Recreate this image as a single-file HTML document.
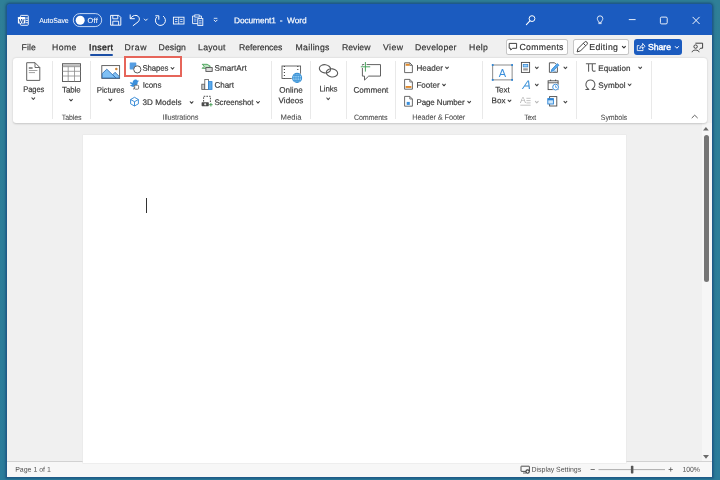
<!DOCTYPE html>
<html lang="en"><head><meta charset="utf-8"><title>Document1 - Word</title>
<style>
html,body{margin:0;padding:0}
body{width:720px;height:480px;overflow:hidden;position:relative;background:#2c7c9b;font-family:"Liberation Sans",sans-serif}
.a{position:absolute}
.t{text-rendering:geometricPrecision;-webkit-text-stroke:0.18px;position:absolute;left:0;top:0;transform-origin:0 0;white-space:pre;line-height:12px;font-family:"Liberation Sans",sans-serif}
svg{position:absolute;overflow:visible;will-change:transform}
.sep{position:absolute;width:1px;top:61px;height:58px;background:#e9e9e9}
.chev{position:absolute;width:5px;height:3px}
#labels{position:absolute;left:0;top:0;width:720px;height:480px;will-change:transform}

</style></head>
<body>
<!-- desktop background + window shadow -->
<div class="a" style="left:0;top:0;width:720px;height:480px;background:linear-gradient(180deg,#2f7f97 0%,#2b7c9b 100%)"></div>
<div class="a" id="win" style="left:7.4px;top:4.4px;width:704.7px;height:472.3px;border-radius:3px 3px 0 0;background:linear-gradient(180deg,#1b5bbf 0,#1b5bbf 31.2px,#f0f0f0 31.2px);box-shadow:0 0 0 1.3px #1f5b88,0 0 2.5px 1.6px rgba(20,66,105,.4);overflow:hidden">
  <!-- scrollbar track -->
  <div class="a" style="left:694.6px;top:119px;width:10.2px;height:339px;background:#f6f6f6"></div>
  <!-- status bar -->
  <div class="a" style="left:0;top:457px;width:705px;height:16px;background:#f7f7f7;border-top:0.8px solid #d2d2d2"></div>
</div>
<!-- ribbon panel -->
<div class="a" style="left:13px;top:57.5px;width:693.5px;height:65.5px;border-radius:3.2px;background:#fff;box-shadow:0 0.5px 2px rgba(0,0,0,.18)"></div>
<!-- page -->
<div class="a" style="left:82.5px;top:134.5px;width:543px;height:328px;background:#fff;box-shadow:0 0 0 0.5px #e6e6e6"></div>
<div class="a" style="left:146px;top:197.5px;width:1px;height:15px;background:#333"></div>
<!-- scrollbar -->
<div class="a" style="left:703.5px;top:135px;width:5.5px;height:147px;border-radius:3px;background:#757575"></div>
<svg style="left:703.4px;top:127.2px" width="5.8" height="3.6" viewBox="0 0 8 5"><path d="M0 5 L4 0 L8 5Z" fill="#6b6b6b"/></svg>
<svg style="left:703.4px;top:454.8px" width="6" height="3.9" viewBox="0 0 8 5"><path d="M0 0 L4 5 L8 0Z" fill="#6b6b6b"/></svg>
<!-- insert tab underline -->
<div class="a" style="left:90px;top:54px;width:22.5px;height:1.6px;border-radius:1px;background:#1c4fa6"></div>
<!-- header buttons -->
<div class="a" style="left:505.6px;top:39.1px;width:62px;height:15.6px;border-radius:2.5px;background:#fff;box-shadow:inset 0 0 0 .9px #c2c2c2"></div>
<div class="a" style="left:573.4px;top:39.1px;width:55.6px;height:15.6px;border-radius:2.5px;background:#fff;box-shadow:inset 0 0 0 .9px #c2c2c2"></div>
<div class="a" style="left:633.8px;top:39.1px;width:47.8px;height:15.7px;border-radius:3px;background:#1b5bbf"></div>
<!-- ribbon separators -->
<div class="sep" style="left:51.7px"></div>
<div class="sep" style="left:89.7px"></div>
<div class="sep" style="left:271.0px"></div>
<div class="sep" style="left:310.2px"></div>
<div class="sep" style="left:346.2px"></div>
<div class="sep" style="left:395.2px"></div>
<div class="sep" style="left:482.0px"></div>
<div class="sep" style="left:576.1px"></div>
<div class="sep" style="left:650.9px"></div>
<!-- shapes highlight -->
<div class="a" style="left:124.2px;top:56.1px;width:58.1px;height:20.8px;box-sizing:border-box;border:2px solid #e6655a"></div>

<!-- icons -->
<svg style="left:0;top:0" width="720" height="480" viewBox="0 0 720 480">
<rect x="20.4" y="15.4" width="7.9" height="9.9" rx="0.8" fill="none" stroke="#fff" stroke-width="0.9"/>
<path d="M25.6 18.1H28 M25.6 20.4H28 M25.6 22.7H28" stroke="#fff" stroke-width="0.9"/>
<rect x="17.9" y="17" width="7.4" height="6.5" rx="0.6" fill="#fff"/>
<text x="21.6" y="22.7" font-family="Liberation Sans, sans-serif" font-weight="700" font-size="6.1" text-anchor="middle" fill="#184a9a">W</text>
<rect x="73.3" y="13.6" width="28.4" height="13" rx="6.5" fill="none" stroke="#e2ecfb" stroke-width="0.85"/>
<circle cx="80.2" cy="20.2" r="4.5" fill="#fff"/>
<path d="M110.6 15.4 H118.8 L120.8 17.4 V25.2 H110.6 Z" fill="none" stroke="#fff" stroke-width="0.95" stroke-linejoin="round"/>
<path d="M112.8 15.6 V18.8 H117.8 V15.6 M112.8 25 V21.2 H118.6 V25" fill="none" stroke="#fff" stroke-width="0.9"/>
<path d="M130.2 14.9 V18.7 H134.4 M130.6 18.3 C131.8 16.4 134 15.2 136 15.4 C139.2 15.8 140.5 19.4 138.2 21.8 L133.2 25.6" fill="none" stroke="#fff" stroke-width="1" stroke-linecap="round" stroke-linejoin="round"/>
<path d="M144.30 19.05 L145.80 20.55 L147.30 19.05" fill="none" stroke="#fff" stroke-width="0.95" stroke-linecap="round" stroke-linejoin="round"/>
<path d="M163.4 16.3 A5.05 5.05 0 1 1 156.5 17.2" fill="none" stroke="#fff" stroke-width="1" stroke-linecap="round"/>
<path d="M155.7 15.8 H158.8 V19.3" fill="none" stroke="#fff" stroke-width="1" stroke-linecap="round" stroke-linejoin="round"/>
<rect x="173.4" y="17.2" width="10.6" height="6.8" fill="none" stroke="#fff" stroke-width="0.9"/>
<path d="M178.7 17.2V24 M175 19.4H177.4 M175 21.6H177.4 M180.2 19.4H182.6 M180.2 21.6H182.6" stroke="#fff" stroke-width="0.8"/>
<path d="M197.6 23.6 H192.6 V16 H194.6 M199.4 16 H201.4 V18" fill="none" stroke="#fff" stroke-width="0.9"/>
<rect x="194.8" y="14.9" width="4.4" height="2.2" fill="none" stroke="#fff" stroke-width="0.8"/>
<rect x="197.8" y="18.6" width="5" height="6.8" fill="none" stroke="#fff" stroke-width="0.9"/>
<path d="M199 20.6H201.6 M199 22.2H201.6 M199 23.8H201.6" stroke="#fff" stroke-width="0.6"/>
<path d="M194 19.2H196.4 M194 21H196.4" stroke="#fff" stroke-width="0.6"/>
<path d="M213.8 18.3H217.4" stroke="#fff" stroke-width="0.8"/>
<path d="M214.10 20.15 L215.60 21.65 L217.10 20.15" fill="none" stroke="#fff" stroke-width="0.95" stroke-linecap="round" stroke-linejoin="round"/>
<circle cx="532" cy="18.6" r="2.9" fill="none" stroke="#fff" stroke-width="1"/>
<path d="M529.9 20.8 L526.4 24.6" stroke="#fff" stroke-width="1.1" stroke-linecap="round"/>
<path d="M598.6 22 C598.4 20.6 597.3 20.2 597.3 18.6 A2.75 2.75 0 0 1 602.8 18.6 C602.8 20.2 601.6 20.6 601.4 22 Z M598.8 23.6 H601.2" fill="none" stroke="#fff" stroke-width="0.85" stroke-linejoin="round" stroke-linecap="round"/>
<path d="M628.8 19.6 H635.6" stroke="#fff" stroke-width="0.9"/>
<rect x="660.4" y="17.1" width="6.8" height="6.8" rx="1.2" fill="none" stroke="#fff" stroke-width="0.9"/>
<path d="M692.9 17.2 L699.3 23.7 M699.3 17.2 L692.9 23.7" stroke="#fff" stroke-width="0.95" stroke-linecap="round"/>
<path d="M509.2 43.4 H516.6 V48.3 H512.7 L510.7 50 V48.3 H509.2 Z" fill="none" stroke="#383838" stroke-width="0.95" stroke-linejoin="round"/>
<path d="M577.1 51.9 L578.1 48.5 L584.5 42.1 A1.55 1.55 0 0 1 586.9 44.5 L580.5 50.9 Z M583.3 43.3 L585.7 45.7" fill="none" stroke="#383838" stroke-width="0.95" stroke-linejoin="round"/>
<path d="M622.40 46.30 L623.90 47.90 L625.40 46.30" fill="none" stroke="#333" stroke-width="1.1" stroke-linecap="round" stroke-linejoin="round"/>
<path d="M639.4 45.6 H637.3 V50.6 H643 V49.2 M639.8 48.6 C640 46.6 641.2 45.4 642.6 45.4 V43.4 L645 46.2 L642.6 48.8 V47 C641.4 47 640.6 47.4 639.8 48.6 Z" fill="none" stroke="#fff" stroke-width="0.85" stroke-linejoin="round"/>
<path d="M675.30 46.55 L676.90 48.25 L678.50 46.55" fill="none" stroke="#fff" stroke-width="1.0" stroke-linecap="round" stroke-linejoin="round"/>
<path d="M695.4 43.2 H702.6 V48.2 H700.6 L699.4 49.6" fill="none" stroke="#383838" stroke-width="0.95" stroke-linejoin="round"/>
<circle cx="695.6" cy="46.6" r="1.7" fill="#f0f0f0" stroke="#383838" stroke-width="0.95"/>
<path d="M692 52.2 C692.4 49.4 698.8 49.4 699.2 52.2" fill="none" stroke="#383838" stroke-width="0.95"/>
<path d="M26.7 62.7 H35 L39.8 67.5 V80.4 H26.7 Z" fill="#fff" stroke="#5a5a5a" stroke-width="0.95" stroke-linejoin="round"/>
<path d="M35 62.7 V67.5 H39.8" fill="none" stroke="#5a5a5a" stroke-width="0.9"/>
<path d="M28.8 68 H32.6" stroke="#5a5a5a" stroke-width="1.3"/>
<path d="M28.8 70.5 H37.4 M28.8 72.6 H35" stroke="#8a8a8a" stroke-width="0.8"/>
<path d="M31.90 97.90 L33.30 99.50 L34.70 97.90" fill="none" stroke="#444" stroke-width="1.05" stroke-linecap="round" stroke-linejoin="round"/>
<rect x="62.5" y="63.7" width="18" height="17.8" fill="#fff" stroke="#5a5a5a" stroke-width="0.95"/>
<rect x="63" y="64.2" width="17" height="2.4" fill="#bdbdbd"/>
<path d="M68.2 66.6 V81.4 M74.5 66.6 V81.4 M62.5 66.7 H80.5 M62.5 71.3 H80.5 M62.5 76 H80.5" stroke="#8b8b8b" stroke-width="0.8"/>
<path d="M69.60 99.30 L71.00 100.90 L72.40 99.30" fill="none" stroke="#444" stroke-width="1.05" stroke-linecap="round" stroke-linejoin="round"/>
<rect x="101.8" y="65.6" width="17.8" height="12.8" fill="#fff" stroke="#555" stroke-width="0.9"/>
<path d="M112.7 74.7 L115 72.3 L119.2 76.4 V78 H116 Z" fill="#86c4f6" stroke="#2f6db2" stroke-width="0.85" stroke-linejoin="round"/>
<path d="M102.2 73.6 L106.8 69.2 L116 78 H102.2 Z" fill="#7fc0f5" stroke="#2f6db2" stroke-width="0.85" stroke-linejoin="round"/>
<circle cx="116.3" cy="69" r="1.25" fill="#cf8436"/>
<path d="M109.00 99.20 L110.40 100.80 L111.80 99.20" fill="none" stroke="#444" stroke-width="1.05" stroke-linecap="round" stroke-linejoin="round"/>
<rect x="129.7" y="62.4" width="6.6" height="7" rx="0.6" fill="#559de2"/>
<circle cx="137.3" cy="69.4" r="3.6" fill="#fff" stroke="#5a5a5a" stroke-width="1"/>
<path d="M171.10 67.50 L172.50 69.10 L173.90 67.50" fill="none" stroke="#444" stroke-width="1.05" stroke-linecap="round" stroke-linejoin="round"/>
<path d="M129.8 82.4 C131 82 132 82.2 132.6 83 C132.6 80.6 134 79.2 135.8 79.4 C136.6 79.4 137.2 80 137.4 80.6 L139.2 80.8 L137.8 82 C137.8 84.6 136.2 86.6 133.6 86.8 C131.8 86.8 130.6 86 130 85 C131 85.2 131.8 84.8 132.2 84.4 C131 84 130.2 83.4 129.8 82.4 Z" fill="#3b8fdb"/>
<rect x="134.3" y="85.2" width="4.3" height="4" rx="1" fill="#fff" stroke="#5a5a5a" stroke-width="0.8"/>
<path d="M133 89.4 L135.4 87.2" stroke="#5a5a5a" stroke-width="0.8"/>
<path d="M134.5 97.3 L138.4 99.5 V103.8 L134.5 106 L130.6 103.8 V99.5 Z M130.6 99.5 L134.5 101.7 L138.4 99.5 M134.5 101.7 V106" fill="none" stroke="#2b83d4" stroke-width="0.9" stroke-linejoin="round"/>
<path d="M190.20 101.70 L191.60 103.30 L193.00 101.70" fill="none" stroke="#444" stroke-width="1.05" stroke-linecap="round" stroke-linejoin="round"/>
<path d="M202.2 64.3 H207.2 L210.4 66.3 L207.2 68.3 H202.2 L204.2 66.3 Z" fill="#bfe3c4" stroke="#3c9a4c" stroke-width="0.85" stroke-linejoin="round"/>
<rect x="205.9" y="67.6" width="6.3" height="3.8" fill="#dcdcdc" stroke="#4a4a4a" stroke-width="0.85"/>
<rect x="201.8" y="84.2" width="3" height="5.2" fill="#c9c9c9" stroke="#5a5a5a" stroke-width="0.8"/>
<rect x="204.8" y="79.4" width="3.6" height="10" fill="#fff" stroke="#5a5a5a" stroke-width="0.8"/>
<rect x="208.4" y="81.6" width="3.6" height="7.8" fill="#5aa9ea" stroke="#2b83d4" stroke-width="0.8"/>
<path d="M203.6 101.6 V96.3 H210.4 V102.2" fill="none" stroke="#444" stroke-width="0.95" stroke-dasharray="1.6 1.1"/>
<rect x="201.6" y="102.3" width="7.2" height="3.9" rx="0.6" fill="#4a4a4a"/>
<circle cx="205.2" cy="104.3" r="1.1" fill="#e8e8e8"/>
<path d="M210.9 102.9 V106.5 M209.1 104.7 H212.7" stroke="#3c9a4c" stroke-width="0.9"/>
<path d="M256.60 101.50 L258.00 103.10 L259.40 101.50" fill="none" stroke="#444" stroke-width="1.05" stroke-linecap="round" stroke-linejoin="round"/>
<rect x="282" y="66" width="18.6" height="12.5" fill="#fff" stroke="#505050" stroke-width="0.85"/>
<path d="M284.4 66 V78.4 M297.8 66 V71.2" stroke="#3c3c3c" stroke-width="1.1" stroke-dasharray="1.1 1.9"/>
<circle cx="297.1" cy="77.9" r="5.5" fill="#fff"/>
<circle cx="297.1" cy="77.9" r="4.5" fill="#a6dafa" stroke="#3d93d6" stroke-width="1.1"/>
<path d="M292.6 77.9 H301.6 M297.1 73.4 V82.4 M293.4 75.4 H300.8 M293.4 80.4 H300.8" stroke="#3d93d6" stroke-width="0.9"/>
<ellipse cx="297.1" cy="77.9" rx="2.3" ry="4.4" fill="none" stroke="#3d93d6" stroke-width="0.9"/>
<ellipse cx="325" cy="68.8" rx="5.7" ry="4.1" fill="none" stroke="#5a5a5a" stroke-width="1.1" transform="rotate(8 325 68.8)"/>
<ellipse cx="332" cy="72.9" rx="5.7" ry="4.1" fill="none" stroke="#5a5a5a" stroke-width="1.1" transform="rotate(8 332 72.9)"/>
<path d="M326.80 98.00 L328.20 99.60 L329.60 98.00" fill="none" stroke="#444" stroke-width="1.05" stroke-linecap="round" stroke-linejoin="round"/>
<path d="M362.4 64.6 H380.5 V76.1 H368.7 L364.5 80.1 V76.1 H362.4 Z" fill="#fff" stroke="#5a5a5a" stroke-width="0.95" stroke-linejoin="round"/>
<path d="M365.4 61.4 V72.2 M360.2 66.8 H370.8" stroke="#fff" stroke-width="2.4"/>
<path d="M365.4 62 V71.6 M360.8 66.8 H370.2" stroke="#45a058" stroke-width="0.95"/>
<path d="M404.6 62.8 H409.8 L412.40000000000003 65.39999999999999 V72.6 H404.6 Z" fill="#fff" stroke="#5a5a5a" stroke-width="0.9" stroke-linejoin="round"/>
<path d="M409.8 62.8 V65.39999999999999 H412.40000000000003" fill="none" stroke="#5a5a5a" stroke-width="0.8"/>
<rect x="405.6" y="63.8" width="4" height="2" fill="#e08a2c"/>
<path d="M445.60 67.10 L447.00 68.70 L448.40 67.10" fill="none" stroke="#444" stroke-width="1.05" stroke-linecap="round" stroke-linejoin="round"/>
<path d="M404.6 79.4 H409.8 L412.40000000000003 82.0 V89.2 H404.6 Z" fill="#fff" stroke="#5a5a5a" stroke-width="0.9" stroke-linejoin="round"/>
<path d="M409.8 79.4 V82.0 H412.40000000000003" fill="none" stroke="#5a5a5a" stroke-width="0.8"/>
<rect x="405.6" y="86" width="5.8" height="1.9" fill="#e08a2c"/>
<path d="M442.60 84.20 L444.00 85.80 L445.40 84.20" fill="none" stroke="#444" stroke-width="1.05" stroke-linecap="round" stroke-linejoin="round"/>
<path d="M404.6 96.4 H409.8 L412.40000000000003 99.0 V106.2 H404.6 Z" fill="#fff" stroke="#5a5a5a" stroke-width="0.9" stroke-linejoin="round"/>
<path d="M409.8 96.4 V99.0 H412.40000000000003" fill="none" stroke="#5a5a5a" stroke-width="0.8"/>
<rect x="406.7" y="101.9" width="3.1" height="3" fill="#3b8fdb"/>
<path d="M467.80 101.30 L469.20 102.90 L470.60 101.30" fill="none" stroke="#444" stroke-width="1.05" stroke-linecap="round" stroke-linejoin="round"/>
<rect x="492.7" y="65" width="19.4" height="14.9" fill="#fff" stroke="#777" stroke-width="0.85"/>
<rect x="491.8" y="64.1" width="1.8" height="1.8" fill="#2b83d4"/>
<rect x="511.20000000000005" y="64.1" width="1.8" height="1.8" fill="#2b83d4"/>
<rect x="491.8" y="79.0" width="1.8" height="1.8" fill="#2b83d4"/>
<rect x="511.20000000000005" y="79.0" width="1.8" height="1.8" fill="#2b83d4"/>
<text x="502.4" y="76.5" font-family="Liberation Sans, sans-serif" font-size="11" text-anchor="middle" fill="#3a8fdc">A</text>
<path d="M508.10 100.10 L509.50 101.70 L510.90 100.10" fill="none" stroke="#444" stroke-width="1.05" stroke-linecap="round" stroke-linejoin="round"/>
<rect x="521.4" y="62.4" width="8.2" height="10" fill="#fff" stroke="#4a4a4a" stroke-width="0.9"/>
<rect x="523.2" y="64.4" width="4.6" height="2.5" fill="#9fd0f5" stroke="#2b83d4" stroke-width="0.7"/>
<rect x="523.2" y="68.3" width="4.6" height="2.2" fill="#9a9a9a"/>
<path d="M535.40 67.10 L536.80 68.70 L538.20 67.10" fill="none" stroke="#444" stroke-width="1.05" stroke-linecap="round" stroke-linejoin="round"/>
<text transform="translate(526 89.3) skewX(-16)" font-family="Liberation Sans, sans-serif" font-size="12.4" text-anchor="middle" fill="#3d93da">A</text>
<path d="M535.40 84.20 L536.80 85.80 L538.20 84.20" fill="none" stroke="#444" stroke-width="1.05" stroke-linecap="round" stroke-linejoin="round"/>
<text x="523" y="103" font-family="Liberation Sans, sans-serif" font-size="8.8" text-anchor="middle" fill="#adadad">A</text>
<path d="M526.4 98.3 H530.6 M526.4 100.6 H530.6 M526.4 102.9 H530.6 M520.3 105.2 H530.6" stroke="#b4b4b4" stroke-width="0.8"/>
<path d="M535.40 101.30 L536.80 102.90 L538.20 101.30" fill="none" stroke="#b8b8b8" stroke-width="1.05" stroke-linecap="round" stroke-linejoin="round"/>
<path d="M549.4 62.8 H554.6 L557.4 65.6 V72.3 H549.4 Z" fill="#fff" stroke="#4a4a4a" stroke-width="0.9" stroke-linejoin="round"/>
<path d="M557.9 64.3 L552 70.6" stroke="#fff" stroke-width="3.2" stroke-linecap="round"/>
<path d="M557.3 63.6 L558.9 65.2 L553.4 70.8 L551.2 71.6 L551.9 69.3 Z" fill="#5aa9ea" stroke="#2b83d4" stroke-width="0.8" stroke-linejoin="round"/>
<path d="M553.6 71.4 C554.6 70.6 555.2 71.6 556.2 71" fill="none" stroke="#2b83d4" stroke-width="0.7"/>
<path d="M564.00 67.10 L565.40 68.70 L566.80 67.10" fill="none" stroke="#444" stroke-width="1.05" stroke-linecap="round" stroke-linejoin="round"/>
<rect x="548.1" y="80.8" width="10" height="8.8" fill="#fff" stroke="#4a4a4a" stroke-width="0.9"/>
<path d="M548.1 82.8 H558.1 M550.6 79.6 V81 M555.6 79.6 V81" stroke="#4a4a4a" stroke-width="0.9"/>
<circle cx="555.6" cy="87.1" r="3.6" fill="#fff"/>
<circle cx="555.6" cy="87.1" r="2.9" fill="#fff" stroke="#2b83d4" stroke-width="0.9"/>
<path d="M555.6 85.4 V87.3 H557" fill="none" stroke="#2b83d4" stroke-width="0.7"/>
<rect x="549.6" y="96.6" width="7.2" height="9.4" fill="#fff" stroke="#4a4a4a" stroke-width="0.9"/>
<rect x="547.8" y="98.6" width="5.6" height="5.4" fill="#cfe8fb" stroke="#2b83d4" stroke-width="0.9"/>
<rect x="547.8" y="98.6" width="5.6" height="1.7" fill="#2b83d4"/>
<path d="M564.00 101.30 L565.40 102.90 L566.80 101.30" fill="none" stroke="#444" stroke-width="1.05" stroke-linecap="round" stroke-linejoin="round"/>
<path d="M586.3 63.8 H595.5 M588.6 63.8 V71.2 M592.3 63.8 V69.6 C592.3 70.9 593.3 71.5 595.2 71" fill="none" stroke="#5a5a5a" stroke-width="1.05" stroke-linecap="round"/>
<path d="M638.80 67.10 L640.20 68.70 L641.60 67.10" fill="none" stroke="#444" stroke-width="1.05" stroke-linecap="round" stroke-linejoin="round"/>
<path d="M585.4 89.4 H588.8 C586.4 87.6 585.6 85.6 586 83.6 C586.6 81.2 588.5 79.9 590.4 79.9 C592.3 79.9 594.2 81.2 594.8 83.6 C595.2 85.6 594.4 87.6 592 89.4 H595.4" fill="none" stroke="#5a5a5a" stroke-width="1.05" stroke-linejoin="round"/>
<path d="M628.20 84.00 L629.60 85.60 L631.00 84.00" fill="none" stroke="#444" stroke-width="1.05" stroke-linecap="round" stroke-linejoin="round"/>
<path d="M692 117.8 L694.7 115.2 L697.4 117.8" fill="none" stroke="#5a5a5a" stroke-width="0.95" stroke-linecap="round" stroke-linejoin="round"/>
<rect x="521" y="466.2" width="8.4" height="5.2" rx="0.4" fill="none" stroke="#3c3c3c" stroke-width="0.9"/>
<path d="M523 473 H526" stroke="#3c3c3c" stroke-width="0.8"/>
<circle cx="527.6" cy="471.6" r="1.7" fill="#f7f7f7" stroke="#3c3c3c" stroke-width="1.1"/>
<path d="M590.6 469.5 H594.8" stroke="#555" stroke-width="0.8"/>
<path d="M598.5 469.6 H665" stroke="#999" stroke-width="0.8"/>
<rect x="630.9" y="465.8" width="2.5" height="7.6" rx="0.6" fill="#555"/>
<path d="M668.6 469.5 H672.8 M670.7 467.4 V471.6" stroke="#555" stroke-width="0.8"/>
</svg>
<!-- text labels -->
<div id="labels">
<span class="t" style="transform:translate(39.35px,15.00px) rotate(0.03deg) scaleX(0.951);font-size:7.3px;color:#fff;letter-spacing:-0.12px;-webkit-text-stroke:0.08px;">AutoSave</span>
<span class="t" style="transform:translate(87.55px,14.90px) rotate(0.03deg);font-size:7.3px;color:#fff;letter-spacing:0.35px;-webkit-text-stroke:0.08px;">Off</span>
<span class="t" style="transform:translate(234.05px,14.30px) rotate(0.03deg);font-size:8.4px;color:#fff;letter-spacing:-0.12px;">Document1</span>
<span class="t" style="transform:translate(279.75px,14.30px) rotate(0.03deg);font-size:8.4px;color:#fff;letter-spacing:0.00px;">-</span>
<span class="t" style="transform:translate(287.05px,14.30px) rotate(0.03deg);font-size:8.4px;color:#fff;letter-spacing:-0.09px;">Word</span>
<span class="t" style="transform:translate(21.55px,41.20px) rotate(0.03deg);font-size:8.7px;color:#333;letter-spacing:0.13px;">File</span>
<span class="t" style="transform:translate(52.05px,41.20px) rotate(0.03deg);font-size:8.7px;color:#333;letter-spacing:0.40px;">Home</span>
<span class="t" style="transform:translate(89.05px,41.20px) rotate(0.03deg);font-size:8.7px;color:#222;letter-spacing:0.43px;-webkit-text-stroke:0.36px #222;">Insert</span>
<span class="t" style="transform:translate(124.55px,41.20px) rotate(0.03deg);font-size:8.7px;color:#333;letter-spacing:0.54px;">Draw</span>
<span class="t" style="transform:translate(158.55px,41.20px) rotate(0.03deg);font-size:8.7px;color:#333;letter-spacing:0.07px;">Design</span>
<span class="t" style="transform:translate(198.05px,41.20px) rotate(0.03deg);font-size:8.7px;color:#333;letter-spacing:0.26px;">Layout</span>
<span class="t" style="transform:translate(239.05px,41.20px) rotate(0.03deg);font-size:8.7px;color:#333;letter-spacing:-0.12px;">References</span>
<span class="t" style="transform:translate(295.55px,41.20px) rotate(0.03deg);font-size:8.7px;color:#333;letter-spacing:0.29px;">Mailings</span>
<span class="t" style="transform:translate(342.05px,41.20px) rotate(0.03deg);font-size:8.7px;color:#333;letter-spacing:-0.02px;">Review</span>
<span class="t" style="transform:translate(383.05px,41.20px) rotate(0.03deg);font-size:8.7px;color:#333;letter-spacing:0.40px;">View</span>
<span class="t" style="transform:translate(415.05px,41.20px) rotate(0.03deg);font-size:8.7px;color:#333;letter-spacing:0.22px;">Developer</span>
<span class="t" style="transform:translate(469.05px,41.20px) rotate(0.03deg);font-size:8.7px;color:#333;letter-spacing:0.34px;">Help</span>
<span class="t" style="transform:translate(519.55px,40.90px) rotate(0.03deg);font-size:8.7px;color:#333;letter-spacing:0.27px;">Comments</span>
<span class="t" style="transform:translate(589.25px,40.90px) rotate(0.03deg);font-size:8.7px;color:#333;letter-spacing:0.35px;">Editing</span>
<span class="t" style="transform:translate(648.05px,40.90px) rotate(0.03deg);font-size:8.7px;color:#fff;letter-spacing:-0.05px;-webkit-text-stroke:0.4px #fff;">Share</span>
<span class="t" style="transform:translate(23.35px,83.50px) rotate(0.03deg) scaleX(0.930);font-size:8.1px;color:#383838;letter-spacing:-0.12px;">Pages</span>
<span class="t" style="transform:translate(62.05px,84.50px) rotate(0.03deg) scaleX(0.990);font-size:8.1px;color:#383838;letter-spacing:-0.12px;">Table</span>
<span class="t" style="transform:translate(61.75px,111.70px) rotate(0.03deg) scaleX(0.911);font-size:7.7px;color:#4a4a4a;letter-spacing:-0.12px;-webkit-text-stroke:0.06px;">Tables</span>
<span class="t" style="transform:translate(96.85px,84.70px) rotate(0.03deg) scaleX(0.968);font-size:8.1px;color:#383838;letter-spacing:-0.12px;">Pictures</span>
<span class="t" style="transform:translate(142.45px,62.70px) rotate(0.03deg) scaleX(0.965);font-size:8.1px;color:#383838;letter-spacing:-0.12px;">Shapes</span>
<span class="t" style="transform:translate(142.75px,79.80px) rotate(0.03deg) scaleX(0.990);font-size:8.1px;color:#383838;letter-spacing:-0.12px;">Icons</span>
<span class="t" style="transform:translate(142.45px,96.90px) rotate(0.03deg);font-size:8.1px;color:#383838;letter-spacing:0.06px;">3D Models</span>
<span class="t" style="transform:translate(162.55px,111.70px) rotate(0.03deg) scaleX(0.959);font-size:7.7px;color:#4a4a4a;letter-spacing:-0.12px;-webkit-text-stroke:0.06px;">Illustrations</span>
<span class="t" style="transform:translate(214.45px,62.70px) rotate(0.03deg);font-size:8.1px;color:#383838;letter-spacing:0.04px;">SmartArt</span>
<span class="t" style="transform:translate(214.45px,79.80px) rotate(0.03deg);font-size:8.1px;color:#383838;letter-spacing:-0.07px;">Chart</span>
<span class="t" style="transform:translate(214.45px,96.90px) rotate(0.03deg) scaleX(0.978);font-size:8.1px;color:#383838;letter-spacing:-0.12px;">Screenshot</span>
<span class="t" style="transform:translate(279.15px,84.80px) rotate(0.03deg);font-size:8.1px;color:#383838;letter-spacing:0.04px;">Online</span>
<span class="t" style="transform:translate(278.55px,95.30px) rotate(0.03deg);font-size:8.1px;color:#383838;letter-spacing:0.04px;">Videos</span>
<span class="t" style="transform:translate(280.55px,111.70px) rotate(0.03deg);font-size:7.7px;color:#4a4a4a;letter-spacing:-0.01px;-webkit-text-stroke:0.06px;">Media</span>
<span class="t" style="transform:translate(319.55px,83.40px) rotate(0.03deg) scaleX(0.971);font-size:8.1px;color:#383838;letter-spacing:-0.12px;">Links</span>
<span class="t" style="transform:translate(353.45px,84.80px) rotate(0.03deg);font-size:8.1px;color:#383838;letter-spacing:-0.03px;">Comment</span>
<span class="t" style="transform:translate(353.95px,111.70px) rotate(0.03deg) scaleX(0.922);font-size:7.7px;color:#4a4a4a;letter-spacing:-0.12px;-webkit-text-stroke:0.06px;">Comments</span>
<span class="t" style="transform:translate(416.45px,62.70px) rotate(0.03deg);font-size:8.1px;color:#383838;letter-spacing:-0.01px;">Header</span>
<span class="t" style="transform:translate(416.45px,79.80px) rotate(0.03deg);font-size:8.1px;color:#383838;letter-spacing:-0.04px;">Footer</span>
<span class="t" style="transform:translate(416.45px,96.90px) rotate(0.03deg) scaleX(0.987);font-size:8.1px;color:#383838;letter-spacing:-0.12px;">Page Number</span>
<span class="t" style="transform:translate(412.15px,111.70px) rotate(0.03deg) scaleX(0.964);font-size:7.7px;color:#4a4a4a;letter-spacing:-0.12px;-webkit-text-stroke:0.06px;">Header &amp; Footer</span>
<span class="t" style="transform:translate(495.15px,84.60px) rotate(0.03deg);font-size:8.1px;color:#383838;letter-spacing:-0.08px;">Text</span>
<span class="t" style="transform:translate(491.55px,95.30px) rotate(0.03deg);font-size:8.1px;color:#383838;letter-spacing:0.07px;">Box</span>
<span class="t" style="transform:translate(524.15px,111.70px) rotate(0.03deg) scaleX(0.880);font-size:7.7px;color:#4a4a4a;letter-spacing:-0.12px;-webkit-text-stroke:0.06px;">Text</span>
<span class="t" style="transform:translate(598.35px,62.90px) rotate(0.03deg);font-size:8.1px;color:#383838;letter-spacing:0.02px;">Equation</span>
<span class="t" style="transform:translate(598.35px,80.00px) rotate(0.03deg);font-size:8.1px;color:#383838;letter-spacing:0.06px;">Symbol</span>
<span class="t" style="transform:translate(600.85px,111.70px) rotate(0.03deg) scaleX(0.914);font-size:7.7px;color:#4a4a4a;letter-spacing:-0.12px;-webkit-text-stroke:0.06px;">Symbols</span>
<span class="t" style="transform:translate(15.15px,464.80px) rotate(0.03deg);font-size:7.0px;color:#505050;letter-spacing:-0.01px;-webkit-text-stroke:0;">Page 1 of 1</span>
<span class="t" style="transform:translate(531.55px,464.80px) rotate(0.03deg);font-size:7.0px;color:#505050;letter-spacing:-0.04px;-webkit-text-stroke:0;">Display Settings</span>
<span class="t" style="transform:translate(682.55px,464.80px) rotate(0.03deg) scaleX(0.986);font-size:7.0px;color:#505050;letter-spacing:-0.12px;-webkit-text-stroke:0;">100%</span>
</div>
</body></html>
